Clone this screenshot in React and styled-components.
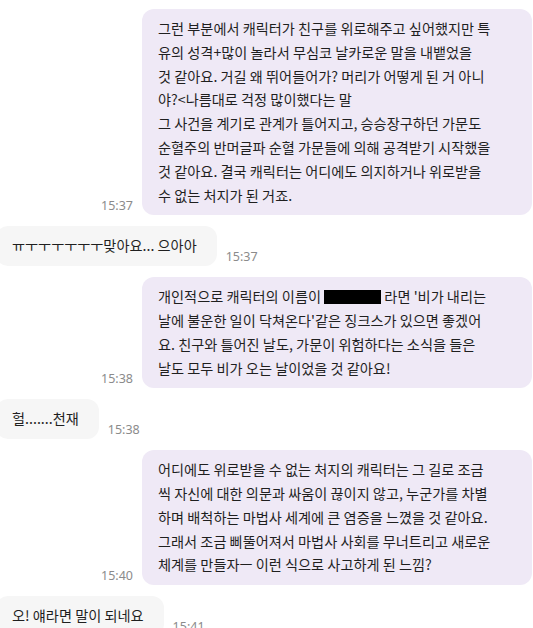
import React from 'react';
import styled, { createGlobalStyle } from 'styled-components';

const GlobalStyle = createGlobalStyle`
  html, body {
    margin: 0;
    padding: 0;
    background: #ffffff;
  }
  body {
    font-family: "Noto Sans CJK KR", "Noto Sans", sans-serif;
    overflow: hidden;
  }
`;

const Thread = styled.div`
  width: 533px;
  height: 628px;
  overflow: hidden;
  display: flex;
  flex-direction: column;
  gap: 11px;
  padding: 9px 1px 0 0;
  box-sizing: border-box;
`;

const Row = styled.div`
  display: flex;
  align-items: flex-end;
  gap: 9px;
  justify-content: ${p => (p.$mine ? 'flex-end' : 'flex-start')};
  margin-left: ${p => (p.$mine ? '0' : '-4px')};
`;

const Bubble = styled.div`
  box-sizing: border-box;
  padding: ${p => (p.$mine ? '8px 16px' : '8px 20px 8px 16px')};
  border-radius: 12px;
  font-size: 14.2px;
  line-height: 23.8px;
  color: #1f1f1f;
  white-space: nowrap;
  background: ${p => (p.$mine ? '#efe9f6' : '#f6f6f6')};
  width: ${p => (p.$mine ? '390px' : 'auto')};
`;

const Time = styled.span`
  font-family: "Noto Sans", "Liberation Sans", sans-serif;
  font-size: 12.5px;
  line-height: 16px;
  color: #8b8b8b;
  margin-bottom: 1px;
  order: ${p => (p.$mine ? 0 : 1)};
`;

const Redacted = styled.span`
  display: inline-block;
  width: 57px;
  height: 14px;
  background: #000;
  vertical-align: -2px;
`;

const Lines = ({ lines }) =>
  lines.map((l, i) => (
    <React.Fragment key={i}>
      {l}
      {i < lines.length - 1 && <br />}
    </React.Fragment>
  ));

const messages = [
  {
    mine: true,
    time: '15:37',
    lines: [
      '그런 부분에서 캐릭터가 친구를 위로해주고 싶어했지만 특',
      '유의 성격+많이 놀라서 무심코 날카로운 말을 내뱉었을',
      '것 같아요. 거길 왜 뛰어들어가? 머리가 어떻게 된 거 아니',
      '야?<나름대로 걱정 많이했다는 말',
      '그 사건을 계기로 관계가 틀어지고, 승승장구하던 가문도',
      '순혈주의 반머글파 순혈 가문들에 의해 공격받기 시작했을',
      '것 같아요. 결국 캐릭터는 어디에도 의지하거나 위로받을',
      '수 없는 처지가 된 거죠.',
    ],
  },
  { mine: false, time: '15:37', lines: ['ㅠㅜㅜㅜㅜㅜㅜ맞아요... 으아아'] },
  {
    mine: true,
    time: '15:38',
    lines: [
      <>개인적으로 캐릭터의 이름이 <Redacted /> 라면 '비가 내리는</>,
      "날에 불운한 일이 닥쳐온다'같은 징크스가 있으면 좋겠어",
      '요. 친구와 틀어진 날도, 가문이 위험하다는 소식을 들은',
      '날도 모두 비가 오는 날이었을 것 같아요!',
    ],
  },
  { mine: false, time: '15:38', lines: ['헐.......천재'] },
  {
    mine: true,
    time: '15:40',
    lines: [
      '어디에도 위로받을 수 없는 처지의 캐릭터는 그 길로 조금',
      '씩 자신에 대한 의문과 싸움이 끊이지 않고, 누군가를 차별',
      '하며 배척하는 마법사 세계에 큰 염증을 느꼈을 것 같아요.',
      '그래서 조금 삐뚤어져서 마법사 사회를 무너트리고 새로운',
      '체계를 만들자ㅡ 이런 식으로 사고하게 된 느낌?',
    ],
  },
  { mine: false, time: '15:41', lines: ['오! 얘라면 말이 되네요'] },
];

export default function App() {
  return (
    <>
      <GlobalStyle />
      <Thread>
        {messages.map((m, i) => (
          <Row key={i} $mine={m.mine}>
            <Time $mine={m.mine}>{m.time}</Time>
            <Bubble $mine={m.mine}>
              <Lines lines={m.lines} />
            </Bubble>
          </Row>
        ))}
      </Thread>
    </>
  );
}
